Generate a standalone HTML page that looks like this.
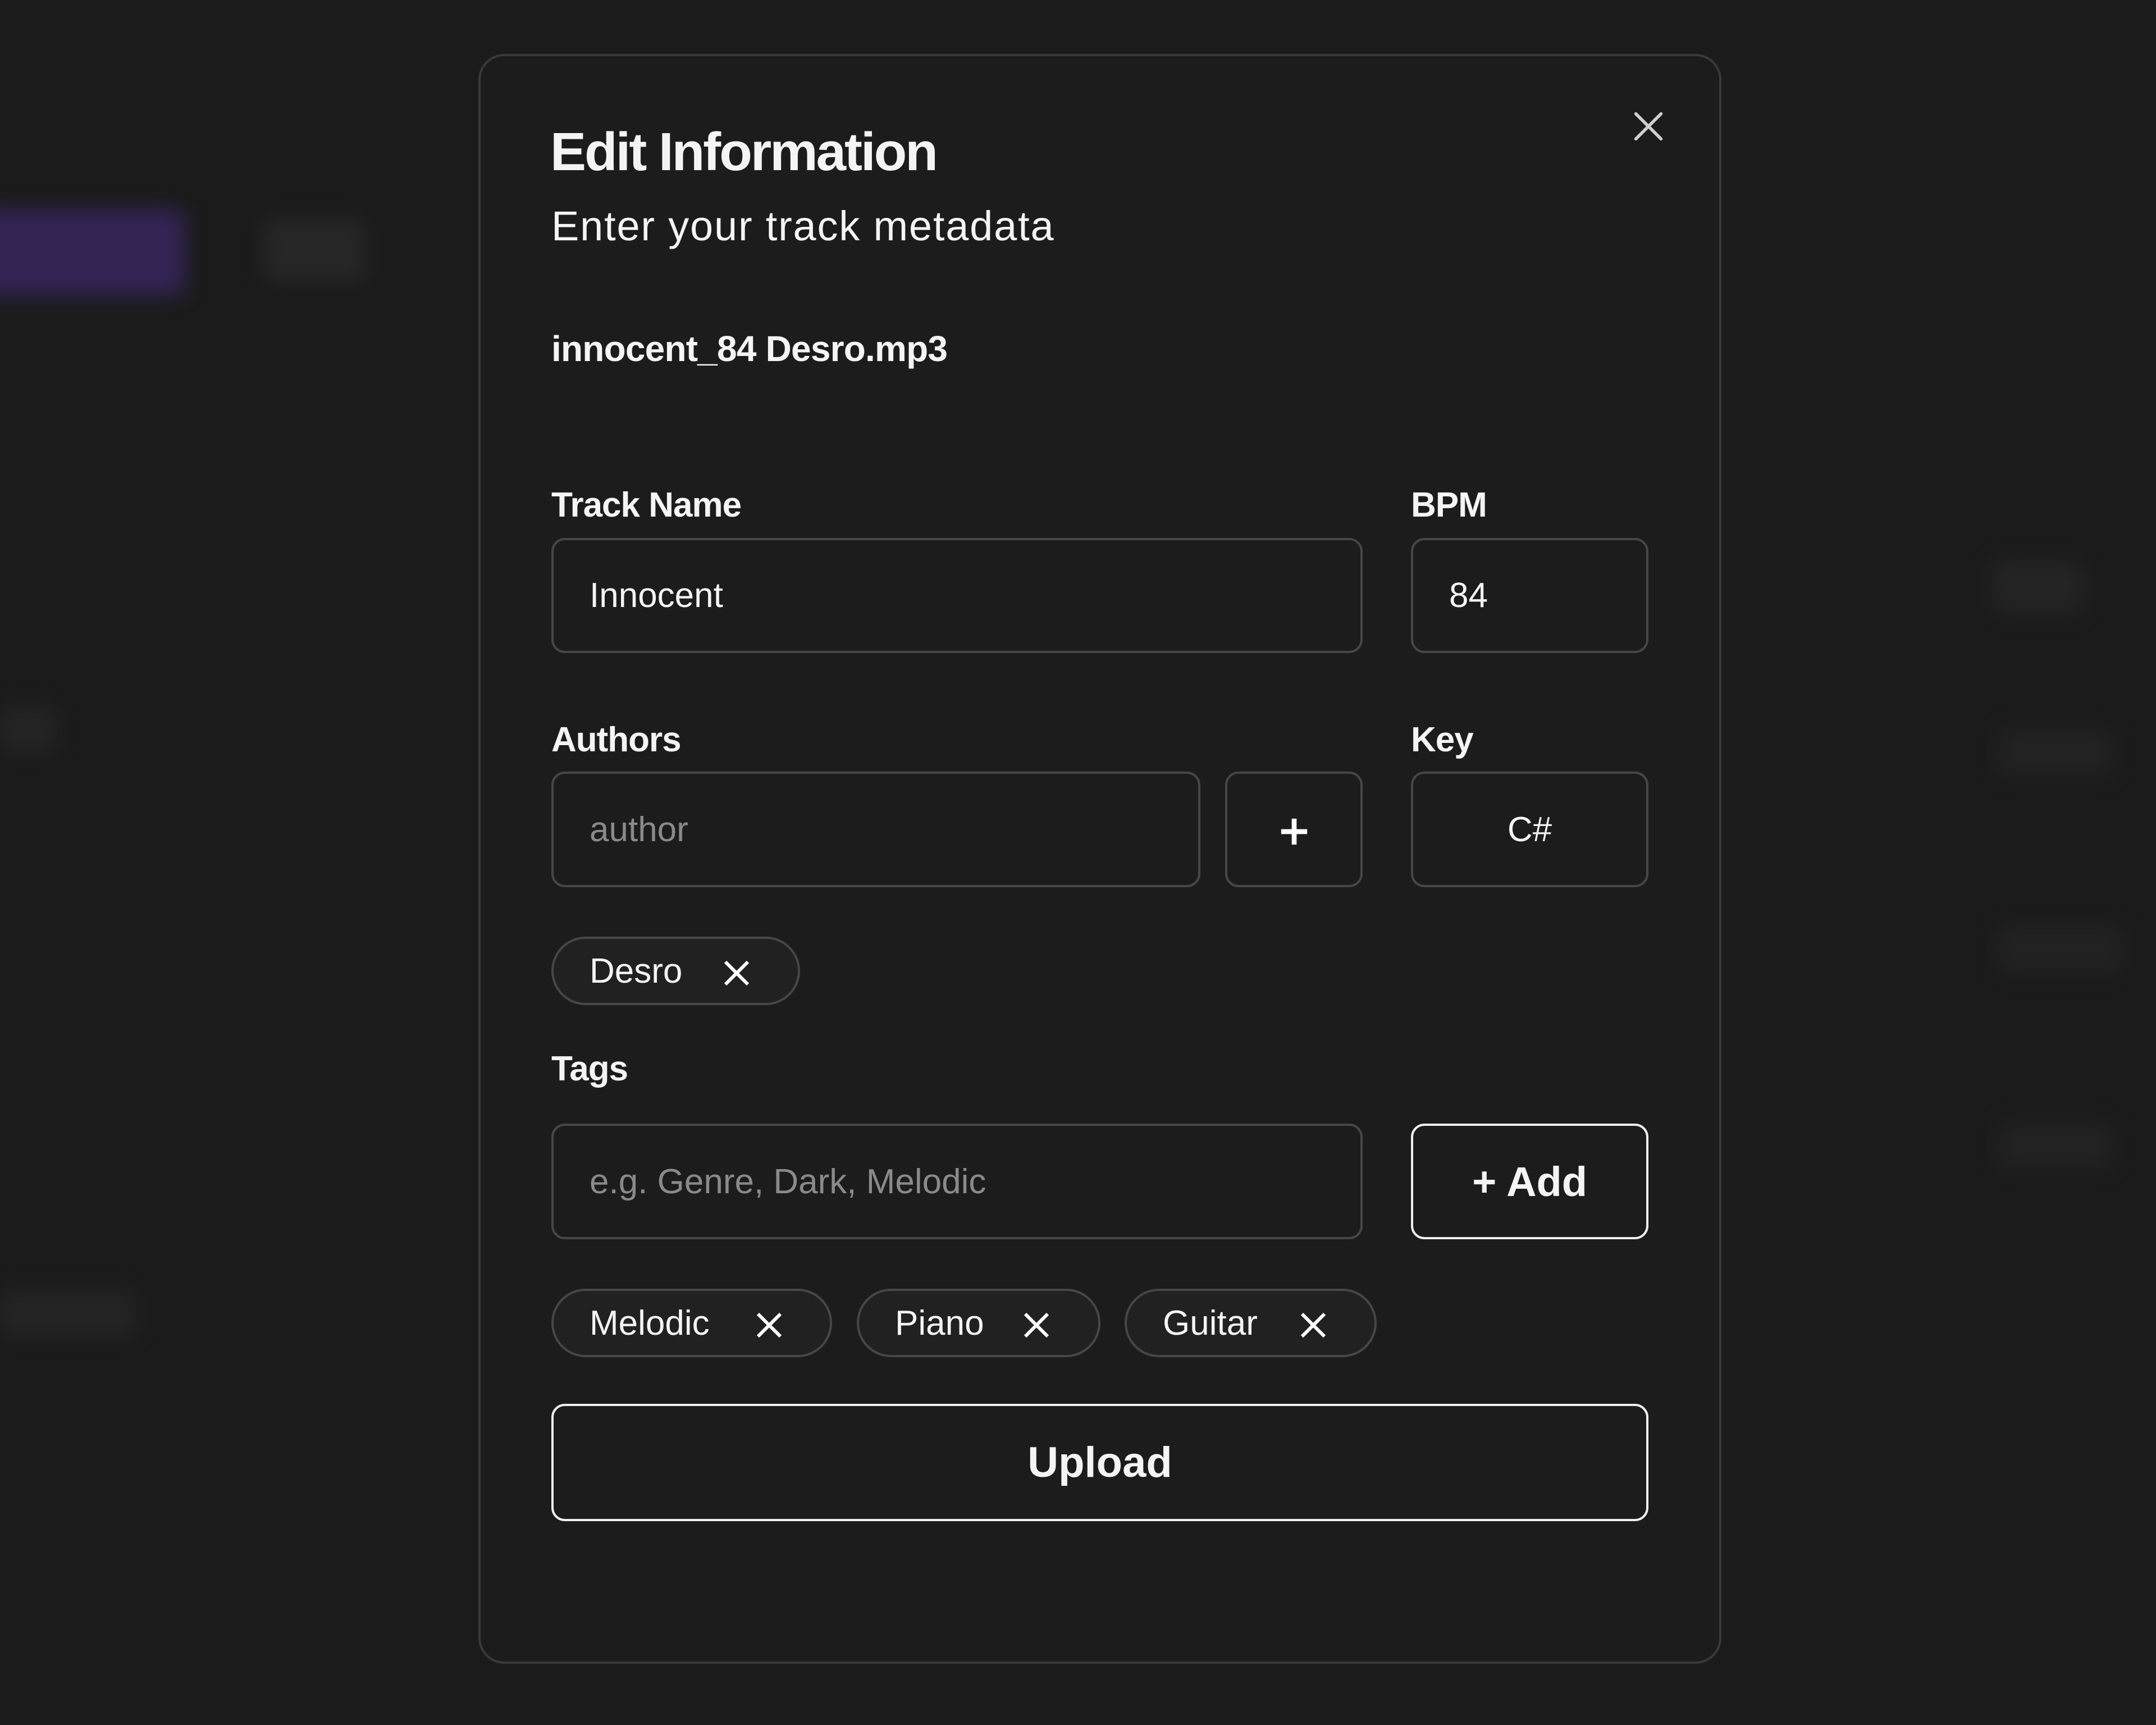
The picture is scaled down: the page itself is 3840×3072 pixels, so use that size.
<!DOCTYPE html>
<html><head><meta charset="utf-8"><style>
*{box-sizing:border-box;margin:0;padding:0}
html,body{width:3840px;height:3072px;background:#1b1b1b;overflow:hidden;font-family:"Liberation Sans",sans-serif;color:#f4f4f4}
.abs{position:absolute}
.blur{position:absolute;filter:blur(18px);opacity:.5}
.modal{position:absolute;left:852px;top:96px;width:2214px;height:2867px;background:#1c1c1c;border:4px solid #3a3a3a;border-radius:46px}
.lbl{position:absolute;font-size:62px;font-weight:bold;letter-spacing:-1px}
.box{position:absolute;border:4px solid #474747;border-radius:24px;font-size:62px;display:flex;align-items:center;padding-left:64px;letter-spacing:0px}
.ph{color:#8a8a8a}
.chip{position:absolute;height:122px;border:4px solid #474747;border-radius:61px;background:#212121;font-size:62px;display:flex;align-items:center;padding-left:64px;letter-spacing:0px}
.chip svg{position:absolute;top:37px}
</style></head><body>
<div class="blur" style="left:-40px;top:372px;width:370px;height:155px;background:#4b2c8c;border-radius:24px"></div>
<div class="blur" style="left:470px;top:390px;width:180px;height:110px;background:#333"></div>
<div class="blur" style="left:0;top:1260px;width:100px;height:80px;background:#2e2e2e"></div>
<div class="blur" style="left:0;top:2300px;width:240px;height:80px;background:#2e2e2e"></div>
<div class="blur" style="left:3550px;top:1000px;width:160px;height:90px;background:#2e2e2e"></div>
<div class="blur" style="left:3560px;top:1300px;width:200px;height:80px;background:#2a2a2a"></div>
<div class="blur" style="left:3560px;top:1650px;width:220px;height:80px;background:#2a2a2a"></div>
<div class="blur" style="left:3560px;top:2000px;width:200px;height:80px;background:#2a2a2a"></div>
<div class="modal"></div>
<svg class="abs" style="left:2908px;top:197px" width="56" height="56" viewBox="0 0 60 60"><path d="M6 6L54 54M54 6L6 54" stroke="#cfcfcf" stroke-width="6" stroke-linecap="round"/></svg>
<div class="abs" style="left:980px;top:216px;font-size:96px;font-weight:bold;letter-spacing:-3px">Edit Information</div>
<div class="abs" style="left:982px;top:360px;font-size:74px;letter-spacing:1.8px">Enter your track metadata</div>
<div class="abs" style="left:982px;top:584px;font-size:64px;font-weight:bold;letter-spacing:-0.8px">innocent_84 Desro.mp3</div>
<div class="lbl" style="left:982px;top:864px">Track Name</div>
<div class="lbl" style="left:2513px;top:864px">BPM</div>
<div class="box" style="left:982px;top:958px;width:1445px;height:205px">Innocent</div>
<div class="box" style="left:2513px;top:958px;width:423px;height:205px">84</div>
<div class="lbl" style="left:982px;top:1282px">Authors</div>
<div class="lbl" style="left:2513px;top:1282px">Key</div>
<div class="box ph" style="left:982px;top:1374px;width:1156px;height:206px">author</div>
<div class="box" style="left:2182px;top:1374px;width:245px;height:206px;padding:0;justify-content:center"><svg width="54" height="54" viewBox="0 0 56 56" style="margin-top:8px"><path d="M28 4V52M4 28H52" stroke="#fff" stroke-width="9"/></svg></div>
<div class="box" style="left:2513px;top:1374px;width:423px;height:206px;padding:0;justify-content:center">C#</div>
<div class="chip" style="left:982px;top:1668px;width:443px">Desro<svg style="left:302px" width="48" height="48" viewBox="0 0 48 48"><path d="M4 4L44 44M44 4L4 44" stroke="#fff" stroke-width="6"/></svg></div>
<div class="lbl" style="left:982px;top:1868px">Tags</div>
<div class="box ph" style="left:982px;top:2001px;width:1445px;height:206px">e.g. Genre, Dark, Melodic</div>
<div class="box" style="left:2513px;top:2001px;width:423px;height:206px;padding:0;justify-content:center;border-color:#f0f0f0;font-weight:bold;font-size:74px">+ Add</div>
<div class="chip" style="left:982px;top:2295px;width:500px">Melodic<svg style="left:360px" width="48" height="48" viewBox="0 0 48 48"><path d="M4 4L44 44M44 4L4 44" stroke="#fff" stroke-width="6"/></svg></div>
<div class="chip" style="left:1526px;top:2295px;width:434px">Piano<svg style="left:292px" width="48" height="48" viewBox="0 0 48 48"><path d="M4 4L44 44M44 4L4 44" stroke="#fff" stroke-width="6"/></svg></div>
<div class="chip" style="left:2003px;top:2295px;width:449px">Guitar<svg style="left:308px" width="48" height="48" viewBox="0 0 48 48"><path d="M4 4L44 44M44 4L4 44" stroke="#fff" stroke-width="6"/></svg></div>
<div class="box" style="left:982px;top:2500px;width:1954px;height:209px;padding:0;justify-content:center;border-color:#f0f0f0;font-weight:bold;font-size:76px">Upload</div>
</body></html>
